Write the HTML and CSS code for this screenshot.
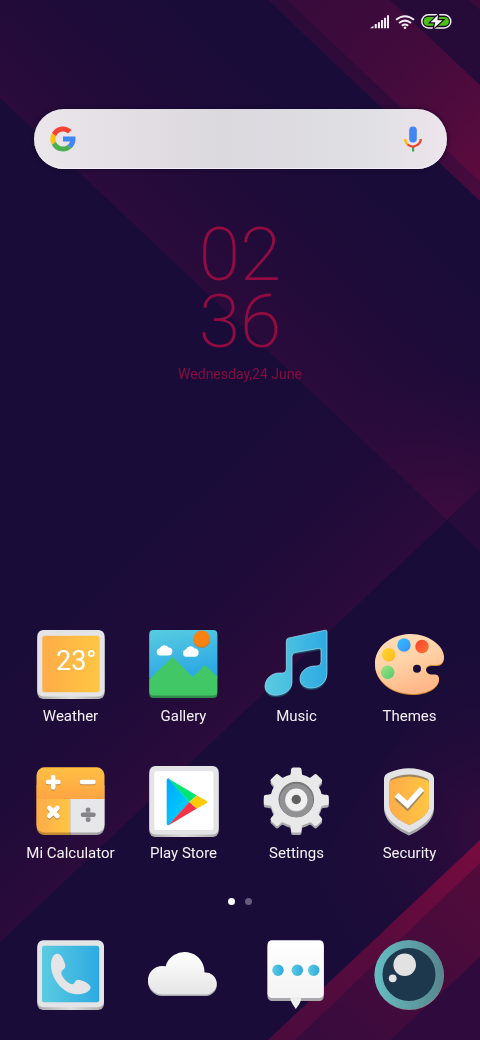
FILE: index.html
```html
<!DOCTYPE html>
<html lang="en">
<head>
<meta charset="utf-8">
<meta name="viewport" content="width=device-width, initial-scale=1">
<title>Home screen</title>
<link rel="stylesheet" href="styles.css">
</head>
<body>
<svg class="wallpaper" viewBox="0 0 480 1040" preserveAspectRatio="none" aria-hidden="true">
  <defs>
    <linearGradient id="w1" gradientUnits="userSpaceOnUse" x1="220" y1="310" x2="350" y2="173"><stop stop-color="#2b0b3b"/><stop offset=".45" stop-color="#210b39"/><stop offset="1" stop-color="#1a0c38"/></linearGradient>
    <linearGradient id="w2" gradientUnits="userSpaceOnUse" x1="220" y1="734" x2="90" y2="597"><stop stop-color="#2b0b3b"/><stop offset=".45" stop-color="#200b39"/><stop offset="1" stop-color="#1a0c38"/></linearGradient>
    <linearGradient id="w3" gradientUnits="userSpaceOnUse" x1="300" y1="0" x2="480" y2="175"><stop stop-color="#370b3b"/><stop offset=".5" stop-color="#430b3c"/><stop offset="1" stop-color="#5c0b3e"/></linearGradient>
    <linearGradient id="w4" gradientUnits="userSpaceOnUse" x1="268" y1="0" x2="480" y2="201"><stop stop-color="#2b0b39"/><stop offset=".6" stop-color="#320b3b"/><stop offset="1" stop-color="#4a0b3d"/></linearGradient>
    <linearGradient id="w5" gradientUnits="userSpaceOnUse" x1="480" y1="840" x2="268" y2="1040"><stop stop-color="#780b40"/><stop offset=".5" stop-color="#580b3d"/><stop offset="1" stop-color="#4b0b3d"/></linearGradient>
    <linearGradient id="w6" gradientUnits="userSpaceOnUse" x1="480" y1="870" x2="320" y2="1040"><stop stop-color="#520b3a"/><stop offset="1" stop-color="#380b3d"/></linearGradient>
    <radialGradient id="w7" gradientUnits="userSpaceOnUse" cx="490" cy="830" r="190"><stop stop-color="#350b3d"/><stop offset="1" stop-color="#1a0c38" stop-opacity="0"/></radialGradient>
    <radialGradient id="w8" gradientUnits="userSpaceOnUse" cx="447" cy="520" r="150"><stop stop-color="#3d0b3f"/><stop offset="1" stop-color="#2b0b3b" stop-opacity="0"/></radialGradient>
  </defs>
  <path fill="#1a0c38" d="M0 0h480v1040H0z"/>
  <path fill="url(#w1)" d="M0 0h268L480 201v288l-33 31L0 98z"/>
  <path fill="url(#w8)" d="M480 350v139l-33 31-160-151z"/>
  <path fill="url(#w2)" d="M447 520 0 942V98z"/>
  <path fill="#270b3b" d="M480 489v63l-33-32z"/>
  <path fill="url(#w4)" d="M268 0h22L480 182v19z"/>
  <path fill="url(#w3)" d="M287 0h103l90 85v97z"/>
  <path fill="#260b38" d="M390 0h90v85z"/>
  <path fill="#390b3a" d="M469 0h11v10z"/>
  <path fill="url(#w7)" d="M480 620v220L268 1040h-70z"/>
  <path fill="url(#w6)" d="M480 855v185H280z"/>
  <path fill="#2f0b3d" d="M480 957v83h-90z"/>
  <path fill="url(#w5)" d="M480 840v23l-185 177h-27z"/>
</svg>

<div class="screen">
  <header class="status" aria-label="Signal, Wi-Fi and battery status">
    <svg width="19" height="14" viewBox="0 0 19 14" fill="#f3eaf3"><path d="M0 13.200 3.500 10.800v2.400zM4.700 9h2.100v4.200H4.700zM7.900 7.200h2.100v6h-2.100zM11 5h2.100v8.200H11zM14 2.800h2.100v10.400H14zM17 .3h2v12.900h-2z"/></svg>
    <svg width="20" height="14" viewBox="0 0 20 14" fill="none" stroke="#f3eaf3" stroke-width="2"><path d="M1 4.800Q10-2.300 19 4.800M4 8Q10 3.200 16 8M6.800 10.800Q10 8.300 13.200 10.800"/><circle cx="10" cy="12.700" r="1.300" fill="#f3eaf3" stroke="none"/></svg>
    <svg width="31" height="15" viewBox="0 0 31 15"><rect x=".8" y=".8" width="29" height="13.200" rx="6.600" fill="#1b0d25" stroke="#f3eaf3" stroke-width="1.500"/><path d="M8 3h15.500a4.400 4.400 0 0 1 0 8.800H7a4.400 4.400 0 0 1 0-8.800z" fill="#4bc112"/><path d="M17 1 9.700 8.200h4.600L13 14l8.400-7.700h-5z" fill="#fff" stroke="#1b0d25" stroke-width="2.400" paint-order="stroke"/></svg>
  </header>

  <form class="search" role="search" onsubmit="return false">
    <svg width="30" height="30" viewBox="0 0 48 48" aria-hidden="true"><path fill="#f44336" d="m6.300 14.700 6.600 4.800C14.700 15.100 19 12 24 12c3.100 0 5.900 1.200 8 3.100l5.700-5.700C34 6.100 29.300 4 24 4 16.300 4 9.700 8.300 6.300 14.700z"/><path fill="#ffc107" d="M6.300 14.700A20 20 0 0 0 6.200 33.200l6.500-5a12 12 0 0 1 .2-8.700z"/><path fill="#4caf50" d="M24 44c5.200 0 9.900-2 13.400-5.200l-6.200-5.200A12 12 0 0 1 12.700 28.200l-6.500 5C9.500 39.600 16.200 44 24 44z"/><path fill="#4285f4" d="M43.600 20.100H24v7.700h11.300a12 12 0 0 1-4.100 5.800l6.200 5.200C37 39.200 44 34 44 24c0-1.300-.1-2.600-.4-3.900z"/></svg>
    <input class="search-input" type="text" aria-label="Search">
    <button class="mic" type="button" aria-label="Voice search"><svg width="20" height="26" viewBox="0 0 20 26" fill="none"><rect x="6.200" y=".5" width="7.600" height="16" rx="3.800" fill="#4285f4"/><path d="M9 20.500h2.200v5H9z" fill="#34a853"/><path d="M2.200 13q0 4 3 6" stroke="#fbbc04" stroke-width="2.200"/><path d="M4.600 18.500q5 4 10.200.2 3-2.300 3-5.700" stroke="#ea4335" stroke-width="2.200"/></svg></button>
  </form>

  <time class="clock" datetime="2020-06-24T02:36">
    <span class="digits">02</span>
    <span class="digits">36</span>
    <span class="date">Wednesday,24 June</span>
  </time>

  <svg class="defs" width="0" height="0" aria-hidden="true">
    <defs>
      <linearGradient id="orange"><stop stop-color="#ffac48"/><stop offset="1" stop-color="#ffc643"/></linearGradient>
      <linearGradient id="orangeV" x2="0" y2="1"><stop stop-color="#ffc043"/><stop offset="1" stop-color="#ffa444"/></linearGradient>
      <linearGradient id="blue"><stop stop-color="#5acbe0"/><stop offset="1" stop-color="#2eaae2"/></linearGradient>
      <linearGradient id="sky" x2=".3" y2="1"><stop stop-color="#59cce0"/><stop offset="1" stop-color="#2da9e4"/></linearGradient>
      <linearGradient id="white" x2="0" y2="1"><stop stop-color="#fff"/><stop offset="1" stop-color="#e5e5e5"/></linearGradient>
      <linearGradient id="paper" x2="0" y2="1"><stop stop-color="#fff"/><stop offset="1" stop-color="#f4f4f4"/></linearGradient>
      <linearGradient id="skin" x2=".4" y2="1"><stop stop-color="#ffdfb8"/><stop offset=".5" stop-color="#ffd3a8"/><stop offset="1" stop-color="#ffb889"/></linearGradient>
      <linearGradient id="yellowDot" x2="1" y2="1"><stop stop-color="#ffd92c"/><stop offset="1" stop-color="#ffb524"/></linearGradient>
      <linearGradient id="blueDot" x2="1" y2="1"><stop stop-color="#2cc0ff"/><stop offset="1" stop-color="#3a90f5"/></linearGradient>
      <linearGradient id="redDot" x2="1" y2="1"><stop stop-color="#f83f2b"/><stop offset="1" stop-color="#ff7438"/></linearGradient>
      <linearGradient id="greenDot" x2="1" y2="1"><stop stop-color="#a0e37c"/><stop offset="1" stop-color="#4fcb70"/></linearGradient>
      <linearGradient id="teal"><stop stop-color="#65bdc2"/><stop offset="1" stop-color="#57868d"/></linearGradient>
      <linearGradient id="cyan" y1="0" x2="1" y2="1"><stop stop-color="#00a5ff"/><stop offset="1" stop-color="#00dcff"/></linearGradient>
      <linearGradient id="edge"><stop stop-color="#aaa"/><stop offset=".5" stop-color="#ddd"/><stop offset="1" stop-color="#aaa"/></linearGradient>
    </defs>
  </svg>

  <nav class="apps" aria-label="Apps">
    <a class="app" href="#weather">
      <svg class="icon" viewBox="0 0 72 72"><rect x="2.300" y="5" width="67.300" height="66" rx="6" fill="url(#edge)"/><rect x="2.300" y="2" width="67.300" height="66.500" rx="6" fill="#e4e3e5"/><rect x="7.300" y="7.700" width="57.400" height="56.500" rx="2.500" fill="url(#orange)"/><text class="temperature" x="21" y="42">23°</text></svg>
      <span>Weather</span>
    </a>
    <a class="app" href="#gallery">
      <svg class="icon" viewBox="0 0 72 72"><rect x="1.300" y="4" width="68" height="66" rx="4" fill="#308c4d"/><path d="M1.300 50V6a4 4 0 0 1 4-4h60a4 4 0 0 1 4 4v44z" fill="url(#sky)"/><path d="M1.300 51 24.700 29l20 20L57 37l12.300 11.500v15a4 4 0 0 1-4 4h-60a4 4 0 0 1-4-4z" fill="#41c766"/><circle cx="53.700" cy="11.600" r="8.200" fill="#c96f1d"/><circle cx="53.700" cy="10.700" r="8.200" fill="#fb8210"/><g fill="#fff"><path id="puff" d="M12 27.500a3.700 3.700 0 0 1-.3-7.300 5 5 0 0 1 8.800-.8 4 4 0 0 1-.3 8.100z"/><use href="#puff" x="26.200" y="1.200"/></g></svg>
      <span>Gallery</span>
    </a>
    <a class="app" href="#music">
      <svg class="icon" viewBox="0 0 72 72"><path transform="translate(0 2)" fill="#174968" d="M25.300 13q0-2.500 2.500-3L64 2.200q2-.4 2 1.500v41C66 54 59 60 50 60c-7 0-11-4-11-9 0-7 6-12.500 14-13h3q4 0 4-4V22q0-2-2-1.700L34 24.500q-3 .5-3 3.500v26C31 62 23 67.300 14.500 67.300 8 67.300 4 63 4 58.500c0-8 7-13.800 15-13.500h2.500q3.800 0 3.800-4z"/><path fill="url(#blue)" stroke="#a6def0" stroke-width=".7" d="M25.300 13q0-2.500 2.500-3L64 2.200q2-.4 2 1.500v41C66 54 59 60 50 60c-7 0-11-4-11-9 0-7 6-12.500 14-13h3q4 0 4-4V22q0-2-2-1.700L34 24.500q-3 .5-3 3.500v26C31 62 23 67.300 14.500 67.300 8 67.300 4 63 4 58.500c0-8 7-13.800 15-13.500h2.500q3.800 0 3.800-4z"/></svg>
      <span>Music</span>
    </a>
    <a class="app" href="#themes">
      <svg class="icon" viewBox="0 0 72 72"><path transform="translate(0 1)" fill="#d88a28" d="M35 6c18-1 35 11 35 23 0 5-3 8-7 8h-4.500c-3.500 0-6.500 1-6.500 4.500s3 5 6 5c4 0 7 0 7 4.500 0 8-11 15-26 15C17 66 1 52 1 36 1 19 16 7 35 6z"/><path fill="url(#skin)" d="M35 6c18-1 35 11 35 23 0 5-3 8-7 8h-4.500c-3.500 0-6.500 1-6.500 4.500s3 5 6 5c4 0 7 0 7 4.500 0 8-11 15-26 15C17 66 1 52 1 36 1 19 16 7 35 6z"/><circle cx="14.700" cy="26.700" r="6.700" fill="url(#yellowDot)"/><circle cx="30" cy="17" r="6.700" fill="url(#blueDot)"/><circle cx="48" cy="18.500" r="6.700" fill="url(#redDot)"/><circle cx="13.700" cy="44.300" r="6.700" fill="url(#greenDot)"/><circle cx="43" cy="40.700" r="4" fill="#1a0c38"/></svg>
      <span>Themes</span>
    </a>
    <a class="app" href="#calculator">
      <svg class="icon" viewBox="0 0 72 72"><path d="M1.500 20h34v50H9.500a8 8 0 0 1-8-8z" fill="#c08a32"/><path d="M35.300 20h34.200v42a8 8 0 0 1-8 8H35.300z" fill="#a4a4a6"/><path d="M1.500 34V10.300a8 8 0 0 1 8-8h52a8 8 0 0 1 8 8V34z" fill="url(#orangeV)"/><path d="M1.500 34h33.800v33.500H9.500a8 8 0 0 1-8-8z" fill="url(#orange)"/><path d="M35.300 34h34.200v25.500a8 8 0 0 1-8 8H35.300z" fill="#e7e7e9"/><g fill="none" stroke-linecap="round" stroke-width="4.600"><path stroke="#c18a45" d="M13 18h10.500M18.200 13v10.700M47 18h11.500M14.300 44.300l8 8M22.300 44.300l-8 8"/><path stroke="#fff" d="M13 17h10.500M18.200 12v10.500M47 17h11.500M14.300 43l8 8M22.300 43l-8 8"/><path stroke="#858587" d="M48 49.700h10.500"/></g><path d="M50.800 43h4.600v13.400h-4.600z" fill="#858587" opacity=".5"/><circle cx="53.100" cy="44.700" r="2.300" fill="#858587"/><circle cx="53.100" cy="54.700" r="2.300" fill="#858587"/></svg>
      <span>Mi Calculator</span>
    </a>
    <a class="app" href="#play-store">
      <svg class="icon" viewBox="0 0 72 72"><rect x="1.300" y="4" width="69.400" height="68" rx="6" fill="url(#edge)"/><rect x="1.300" y="1" width="69.400" height="68.500" rx="6" fill="#e4e3e5"/><rect x="6.300" y="6" width="59.200" height="59" rx="2.500" fill="#fff"/><path d="M18.700 15q0-2 2-1.500L41.500 37 21 60q-2.300.6-2.300-1.500z" fill="url(#cyan)"/><path d="M20.200 13.400 48.900 30.500l-7.600 6.500z" fill="#00e676"/><path d="M20.200 60.500 48.900 43.500 41.300 37z" fill="#f63448"/><path d="m48.900 30.500 9.600 5.300q1.800 1.200 0 2.400l-9.600 5.300-7.600-6.500z" fill="#ffcb05"/></svg>
      <span>Play Store</span>
    </a>
    <a class="app" href="#settings">
      <svg class="icon" viewBox="0 0 72 72"><defs><g id="gear"><circle cx="35.300" cy="35" r="26"/><g id="teeth"><path id="tooth" d="M27 12c2.500-1 2.800-3 3-7q0-2.500 2-2.500h6.600q2 0 2 2.500c.2 4 .5 6 3 7v8H27z"/><use href="#tooth" transform="rotate(90 35.300 35)"/><use href="#tooth" transform="rotate(180 35.300 35)"/><use href="#tooth" transform="rotate(270 35.300 35)"/></g><use href="#teeth" transform="rotate(45 35.300 35)"/></g></defs><use href="#gear" y="2.500" fill="#aaa9ac"/><use href="#gear" fill="#e9e9ea"/><circle cx="35.300" cy="34.500" r="17.800" fill="#777779"/><circle cx="35.300" cy="35.500" r="16.700" fill="#929294"/><circle cx="35.300" cy="35.500" r="11" fill="#d2d2d4"/><circle cx="35.300" cy="34.500" r="11" fill="#f0f0f1"/><circle cx="35.300" cy="34.500" r="4.700" fill="#606063"/></svg>
      <span>Settings</span>
    </a>
    <a class="app" href="#security">
      <svg class="icon" viewBox="0 0 72 72"><path fill="#a4a4a9" d="M10 16q0-4 4-6Q35 .5 56 10q4 2 4 6v27c0 13-11 21-25 27.500C21 64 10 56 10 43z"/><path fill="#e4e4e6" d="M10 14q0-4 4-6Q35-1.500 56 8q4 2 4 6v26c0 13-11 21-25 27.500C21 61 10 53 10 40z"/><path fill="#9b8460" d="M15.500 17q0-2.500 2-3.500Q35 5.500 53 13.500q2 1 2 3.500v23c0 9-8 14.500-19.700 20-11.800-5.500-19.800-11-19.800-20z"/><path fill="url(#orange)" d="M15.500 18q0-2 2-3Q35 8 53 15q2 1 2 3v22c0 9-8 14.500-19.700 20-11.800-5.500-19.800-11-19.800-20z"/><g fill="none" stroke-width="5.500"><path stroke="#a1885d" d="m22.500 32.500 11 10L48 26"/><path stroke="#fff" d="m22.500 29.800 11 10L48 23.600"/></g></svg>
      <span>Security</span>
    </a>
  </nav>

  <div class="pager"><button class="dot dot-current" type="button" aria-label="Page 1"></button><button class="dot" type="button" aria-label="Page 2"></button></div>

  <nav class="dock" aria-label="Dock">
    <a class="app" href="#phone" aria-label="Phone"><svg class="icon" viewBox="0 0 72 72"><rect x="2.300" y="5" width="66.700" height="67" rx="6" fill="url(#edge)"/><rect x="2.300" y="2.300" width="66.700" height="67" rx="6" fill="#e4e3e5"/><rect x="7" y="7.700" width="57.200" height="56.500" rx="2.500" fill="url(#blue)"/><path fill="#e5e5e7" d="M21 16c3-1 5 1 7 5 1.500 3 2.300 5.500 2.300 7.300 0 3-4 3.500-4 6.700 0 4 7 11.300 11 11.300 3 0 2.200-4.500 5.700-4.500 4 0 12.500 4.200 12.500 7.500 0 5-8 7.300-14 7C27 55.500 16 40 16 27c0-6 2-10 5-11z"/></svg></a>
    <a class="app" href="#cloud" aria-label="Cloud"><svg class="icon" viewBox="0 0 72 72"><path transform="translate(0 1.500)" fill="#aaaaae" d="M14 56.500a14.300 14.300 0 1 1 3.600-28.200 19.800 19.800 0 0 1 38.800 6.300A11 11 0 1 1 59 56.500z"/><path fill="url(#white)" d="M14 56.500a14.300 14.300 0 1 1 3.600-28.200 19.800 19.800 0 0 1 38.800 6.300A11 11 0 1 1 59 56.500z"/></svg></a>
    <a class="app" href="#messages" aria-label="Messages"><svg class="icon" viewBox="0 0 72 72"><rect x="6.500" y="5" width="56.300" height="58" rx="4.500" fill="#a9a9ad"/><rect x="6.500" y="2.300" width="56.300" height="57.700" rx="4.500" fill="url(#paper)"/><path d="M29 59h11.500q-.5 5-2.500 7.500L34.800 71l-3-4.500Q29.500 63 29 59z" fill="#ededed"/><g fill="url(#blue)"><circle cx="17" cy="32.300" r="5.700"/><circle cx="36.300" cy="32.300" r="5.700"/><circle cx="52.700" cy="32.300" r="5.700"/></g></svg></a>
    <a class="app" href="#camera" aria-label="Camera"><svg class="icon" viewBox="0 0 72 72"><circle cx="35.400" cy="37.500" r="34.600" fill="#8d8387"/><circle cx="35" cy="36.700" r="34.600" fill="url(#teal)"/><circle cx="35" cy="36.500" r="26.500" fill="#1d374d"/><circle cx="30.700" cy="26.700" r="11.300" fill="#e2e2e3"/><circle cx="18.700" cy="40.300" r="3.900" fill="#e2e2e3"/></svg></a>
  </nav>
</div>
</body>
</html>
```

FILE: styles.css
```css
* { box-sizing: border-box; }

body {
  margin: 0;
  background: #1a0c38;
  color: #f5f2f7;
  font-family: Roboto, sans-serif;
}

.wallpaper {
  position: fixed;
  inset: 0;
  width: 100%;
  height: 100%;
  z-index: -1;
}

.screen {
  display: flex;
  flex-direction: column;
  min-height: 100vh;
  padding: 0 14px 30px;
}

.status {
  display: flex;
  align-items: center;
  justify-content: flex-end;
  gap: 6px;
  height: 43px;
  padding-right: 14px;
}

.search {
  display: flex;
  align-items: center;
  height: 60px;
  margin: 66px 19px 0 20px;
  padding: 0 24px 0 14px;
  border-radius: 30px;
  background: linear-gradient(90deg, #eae6ea, #dbd8de 45%, #dfdfe4 80%, #ede5eb);
  box-shadow: inset 0 -1px 0 #f3eff5, 0 0 4px #12082a;
}

.search-input {
  flex: 1;
  min-width: 0;
  height: 100%;
  padding: 0 16px;
  border: 0;
  outline: 0;
  background: none;
  color: #333;
  font: 18px Roboto, sans-serif;
}

.mic {
  display: flex;
  padding: 0;
  border: 0;
  background: none;
}

.clock {
  display: flex;
  flex-direction: column;
  align-items: center;
  margin-top: 52px;
  color: #920c42;
}

.digits {
  font-size: 75px;
  font-weight: 200;
  line-height: 67px;
}

.date {
  margin-top: 9px;
  color: #860c40;
  font-size: 14px;
  line-height: 20px;
}

.defs { position: absolute; }

.apps,
.dock {
  display: grid;
  grid-template-columns: repeat(4, 1fr);
}

.apps {
  row-gap: 38px;
  margin-top: auto;
}

.app {
  display: flex;
  flex-direction: column;
  align-items: center;
  gap: 5px;
  color: inherit;
  font-size: 15px;
  line-height: 22px;
  text-decoration: none;
  white-space: nowrap;
}

.icon {
  width: 72px;
  height: 72px;
  overflow: visible;
}

.temperature {
  fill: #fff;
  font-size: 27px;
}

.pager {
  display: flex;
  justify-content: center;
  gap: 10px;
  margin: 34px 0 33px;
}

.dot {
  width: 7px;
  height: 7px;
  padding: 0;
  border: 0;
  border-radius: 50%;
  background: #685c7c;
}

.dot-current { background: #fff; }
```
